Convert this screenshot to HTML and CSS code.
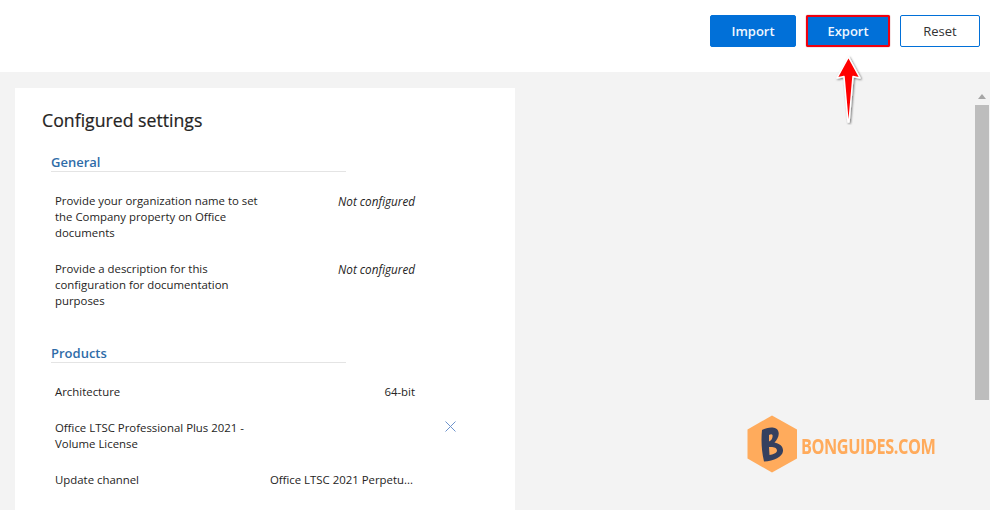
FILE: index.html
```html
<!DOCTYPE html>
<html lang="en">
<head>
<meta charset="utf-8">
<title>Configured settings</title>
<link rel="stylesheet" href="styles.css">
</head>
<body>
<div class="app">
  <header class="topbar">
    <button class="btn primary">Import</button>
    <button class="btn primary export">Export</button>
    <button class="btn outline">Reset</button>
  </header>
  <main class="content">
    <section class="card">
      <h1 class="title">Configured settings</h1>
      <h2 class="group">General</h2>
      <div class="row tall">
        <div class="label">Provide your organization name to set the Company property on Office documents</div>
        <div class="value"><em class="unset">Not configured</em></div>
      </div>
      <div class="row tall">
        <div class="label">Provide a description for this configuration for documentation purposes</div>
        <div class="value"><em class="unset">Not configured</em></div>
      </div>
      <h2 class="group products">Products</h2>
      <div class="row arch">
        <div class="label">Architecture</div>
        <div class="value">64-bit</div>
      </div>
      <div class="row suite">
        <div class="label">Office LTSC Professional Plus 2021 - Volume License</div>
        <div class="value"></div>
        <svg class="close" width="11" height="11" viewBox="0 0 11 11"><path d="M.5.5l10 10M10.500.5l-10 10" stroke="#6d93cc" stroke-width="1" fill="none"/></svg>
      </div>
      <div class="row channel">
        <div class="label">Update channel</div>
        <div class="value nowrap">Office LTSC 2021 Perpetu...</div>
      </div>
    </section>
    <div class="scrollbar">
      <div class="arrow"></div>
      <div class="thumb"></div>
    </div>
  </main>
</div>
<svg class="pointer" width="30" height="70" viewBox="0 0 30 70">
  <defs><filter id="s" x="-30%" y="-30%" width="160%" height="160%"><feDropShadow dx="1" dy="1" stdDeviation="1.2" flood-color="#000" flood-opacity=".55"/></filter></defs>
  <path d="M14.500 2L26 23L19 21.500L15 67L14 67L10 21.500L3 23Z" fill="#f00" stroke="#fff" stroke-width="1.500" stroke-linejoin="round" filter="url(#s)"/>
</svg>
<div class="brand">
  <svg class="hex" width="51" height="58" viewBox="0 0 51 58">
    <path d="M25 0.500L50 14.500V43.500L25 57.500L0.500 43.500V14.500Z" fill="#ffab5c"/>
    <path fill-rule="evenodd" d="M15 15C21 12 30 11 31.500 17C32.500 21 30 25 27.500 27.500C32 28.500 36.500 31 36 36C35.500 42 27 46 17 46.500C14.500 36 14 25 15 15ZM22 20L22 26.500C25 25.500 26 22 25.500 20C25 19 23.500 19 22 20ZM22 32L22.500 40C26 39.500 30 38 30 35.500C30 32.500 26 31.500 22 32Z" fill="#34405f"/>
  </svg>
  <span class="brand-name">BONGUIDES.COM</span>
</div>
</body>
</html>
```
FILE: styles.css
```css
* { box-sizing: border-box; }
html, body { margin: 0; height: 510px; overflow: hidden; background: #fff; }
body { font-family: "Open Sans", "Noto Sans", sans-serif; color: #252423; position: relative; }
.app { width: 990px; height: 510px; display: flex; flex-direction: column; }
.topbar { height: 72px; background: #fff; display: flex; align-items: flex-start; padding: 15px 10px 0 710px; gap: 10px; }
.btn { height: 32px; border-radius: 2px; font: 600 13px "Open Sans", sans-serif; padding: 0; cursor: pointer; }
.primary { width: 86px; background: #0170d8; color: #eef6ff; border: 1px solid #0170d8; }
.export { width: 84px; border: 2px solid #f0000f; box-shadow: 0 0 1px #a00; }
.outline { width: 80px; background: #fff; color: #333; border: 1px solid #0170d8; font-weight: 400; }
.content { flex: 1; background: #f3f3f3; display: flex; padding: 16px 1px 0 15px; justify-content: space-between; min-height: 0; }
.card { width: 500px; background: #fff; padding: 19px 0 0 27px; font-size: 11.400px; line-height: 16px; }
.title { margin: 0; font-size: 17.700px; font-weight: 400; line-height: 26px; color: #252423; -webkit-text-stroke: .2px #252423; }
.group { margin: 20px 0 0 9px; width: 295px; font-size: 13px; font-weight: 600; color: #2f6ca8; line-height: 18px; border-bottom: 1px solid #e4e4e4; }
.group.products { margin-top: 15px; }
.row { display: flex; margin-left: 13px; position: relative; }
.label { width: 206px; flex: none; color: #252423; }
.value { width: 154px; text-align: right; flex: none; }
.unset { font-size: 11.700px; }
.nowrap { white-space: nowrap; padding-right: 2px; }
.tall { height: 68px; }
.group + .tall { margin-top: 21px; }
.arch { margin-top: 21px; height: 22px; }
.suite { margin-top: 14px; height: 52px; }
.channel { height: 30px; }
.close { position: absolute; left: 390px; top: 1px; }
.scrollbar { width: 14px; display: flex; flex-direction: column; align-items: center; }
.arrow { width: 0; height: 0; margin-top: 6px; border: 4px solid transparent; border-top: 0; border-bottom: 5px solid #a6a6a6; }
.thumb { width: 14px; height: 295px; margin-top: 6px; background: #bdbdbd; }
.pointer { position: absolute; left: 834px; top: 55px; }
.brand { position: absolute; left: 747px; top: 415px; display: flex; align-items: center; gap: 3px; }
.brand-name { font: 700 22px/1 "Open Sans", sans-serif; color: #ffab5c; letter-spacing: -.6px; transform: scaleX(.74); transform-origin: left center; margin-top: 2px; }
```
